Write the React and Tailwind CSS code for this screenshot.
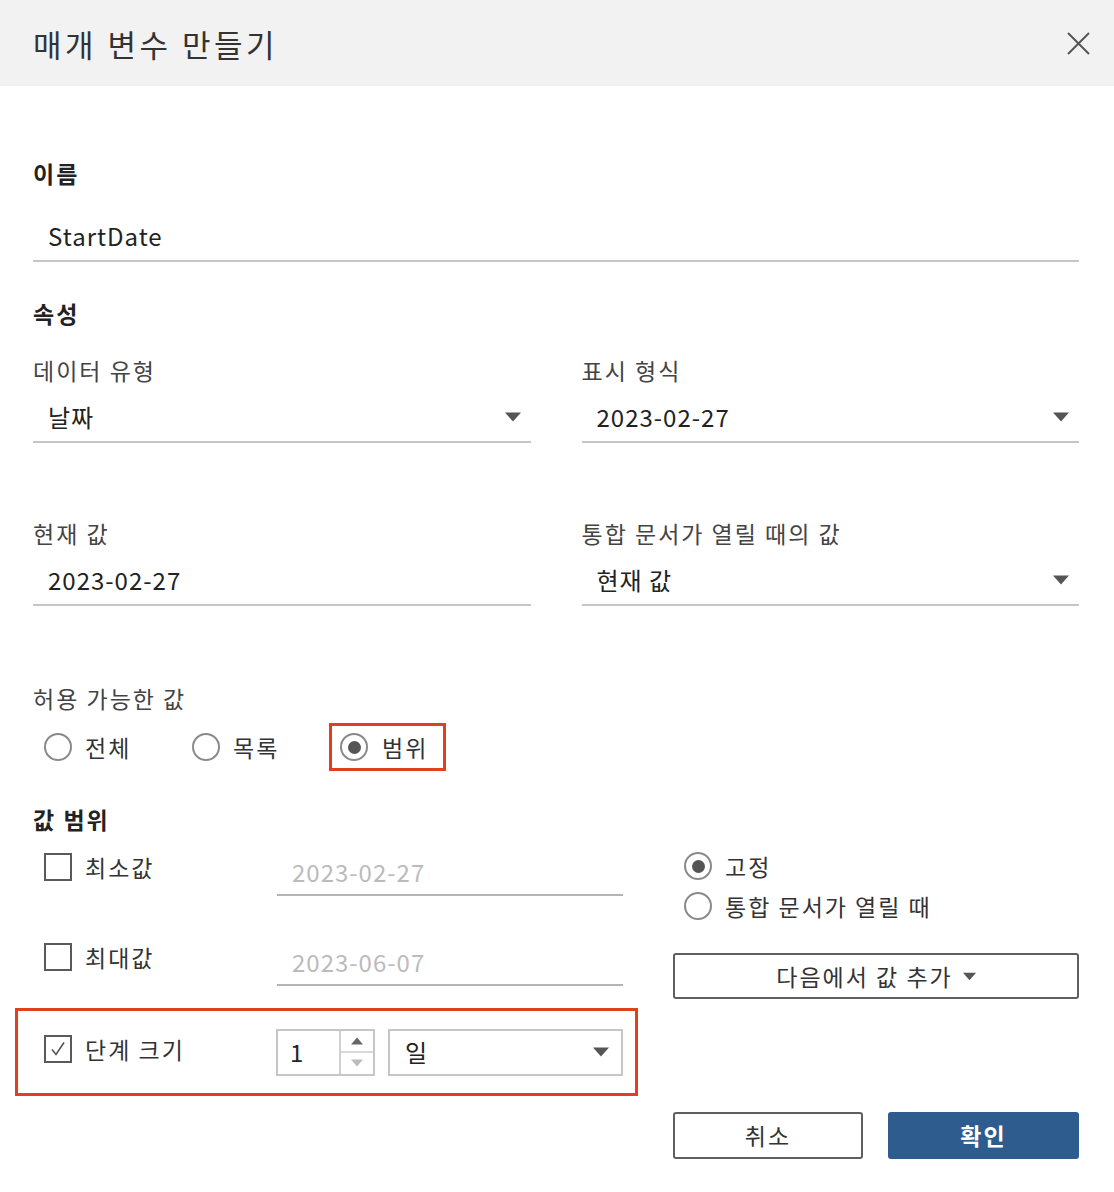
import React from "react";

const Caret = ({ w = 16, h = 10 }) => (
  <svg width={w} height={h} viewBox="0 0 16 10" className="shrink-0">
    <path d="M0 0.5h16L8 9.5z" fill="#555555" />
  </svg>
);

const Radio = ({ checked }) => (
  <span className="relative flex h-[28px] w-[28px] shrink-0 items-center justify-center rounded-full border-2 border-[#8a8a8a] bg-white">
    {checked && <span className="h-[13px] w-[13px] rounded-full bg-[#555555]" />}
  </span>
);

const Checkbox = ({ checked }) => (
  <span className="flex h-[28px] w-[28px] shrink-0 items-center justify-center border-2 border-[#5a5a5a] bg-white">
    {checked && (
      <svg width="20" height="20" viewBox="0 0 20 20">
        <path d="M4 10.5l4 5 8-12" fill="none" stroke="#555555" strokeWidth="1.6" />
      </svg>
    )}
  </span>
);

const Label = ({ children, bold }) => (
  <div
    className={`h-[30px] text-[23px] leading-[30px] tracking-[2px] ${
      bold ? "font-bold text-[#222222]" : "text-[#444444]"
    }`}
  >
    {children}
  </div>
);

const Field = ({ children, arrow }) => (
  <div className="flex h-[48px] items-center justify-between border-b-2 border-[#c6c6c6] pb-[2px] pl-[15px] pr-[10px] text-[24px] tracking-[1px] text-[#222222]">
    <span>{children}</span>
    {arrow && <Caret />}
  </div>
);

export default function App() {
  return (
    <div className="h-[1192px] w-[1114px] overflow-hidden bg-white font-['Noto_Sans_CJK_KR',sans-serif] text-[#333333]">
      {/* Header */}
      <div className="flex h-[86px] items-center justify-between bg-[#f2f2f2] pl-[33px] pr-[24px]">
        <div className="text-[31px] leading-none tracking-[3.5px] text-[#333333]">매개 변수 만들기</div>
        <svg width="23" height="23" viewBox="0 0 23 23">
          <path d="M1 1L22 22M22 1L1 22" stroke="#555555" strokeWidth="2" />
        </svg>
      </div>

      <div className="pl-[33px] pr-[35px]">
        {/* 이름 */}
        <div className="pt-[72px]">
          <Label bold>이름</Label>
        </div>
        <div className="mt-[26px]">
          <Field>StartDate</Field>
        </div>

        {/* 속성 */}
        <div className="mt-[36px]">
          <Label bold>속성</Label>
        </div>

        <div className="mt-[27px] grid grid-cols-2 gap-x-[51px]">
          <div>
            <Label>데이터 유형</Label>
            <div className="mt-[10px]">
              <Field arrow>날짜</Field>
            </div>
          </div>
          <div>
            <Label>표시 형식</Label>
            <div className="mt-[10px]">
              <Field arrow>2023-02-27</Field>
            </div>
          </div>
          <div className="mt-[75px]">
            <Label>현재 값</Label>
            <div className="mt-[10px]">
              <Field>2023-02-27</Field>
            </div>
          </div>
          <div className="mt-[75px]">
            <Label>통합 문서가 열릴 때의 값</Label>
            <div className="mt-[10px]">
              <Field arrow>현재 값</Field>
            </div>
          </div>
        </div>

        {/* 허용 가능한 값 */}
        <div className="mt-[77px]">
          <Label>허용 가능한 값</Label>
        </div>
        <div className="mt-[10px] flex items-center pl-[11px] text-[23px] tracking-[2px] text-[#333333]">
          <div className="flex w-[148px] items-center gap-[13px]">
            <Radio />
            <span>전체</span>
          </div>
          <div className="flex w-[137px] items-center gap-[13px]">
            <Radio />
            <span>목록</span>
          </div>
          <div className="flex h-[48px] w-[117px] items-center gap-[14px] border-[3px] border-[#e0401e] pl-[8px]">
            <Radio checked />
            <span>범위</span>
          </div>
        </div>

        {/* 값 범위 */}
        <div className="mt-[33px]">
          <Label bold>값 범위</Label>
        </div>

        <div className="mt-[16px] flex">
          <div className="w-[590px]">
            <div className="flex">
              <div className="flex h-[34px] w-[244px] items-center gap-[13px] pl-[11px] text-[23px] tracking-[2px]">
                <Checkbox />
                <span>최소값</span>
              </div>
              <div className="flex h-[46px] flex-1 items-center border-b-2 border-[#b5b5b5] pl-[15px] text-[24px] tracking-[1px] text-[#bbbbbb]">
                2023-02-27
              </div>
            </div>
            <div className="mt-[44px] flex">
              <div className="flex h-[34px] w-[244px] items-center gap-[13px] pl-[11px] text-[23px] tracking-[2px]">
                <Checkbox />
                <span>최대값</span>
              </div>
              <div className="flex h-[46px] flex-1 items-center border-b-2 border-[#b5b5b5] pl-[15px] text-[24px] tracking-[1px] text-[#bbbbbb]">
                2023-06-07
              </div>
            </div>
          </div>

          <div className="-mt-[4px] ml-[50px] w-[406px] text-[23px] tracking-[2px]">
            <div className="flex h-[40px] items-center gap-[13px] pl-[11px]">
              <Radio checked />
              <span>고정</span>
            </div>
            <div className="flex h-[40px] items-center gap-[13px] pl-[11px]">
              <Radio />
              <span>통합 문서가 열릴 때</span>
            </div>
            <button className="mt-[27px] flex h-[46px] w-full items-center justify-center gap-[10px] rounded-[3px] border-2 border-[#5f5f5f] bg-white text-[23px] tracking-[2px] text-[#333333]">
              <span>다음에서 값 추가</span>
              <Caret w={13} h={9} />
            </button>
          </div>
        </div>

        {/* 단계 크기 */}
        <div className="-ml-[18px] mt-[9px] flex h-[88px] w-[623px] items-center border-[3px] border-[#e0401e] pl-[26px]">
          <div className="flex w-[232px] items-center gap-[13px] self-start pt-[21px] text-[23px] tracking-[2px]">
            <Checkbox checked />
            <span>단계 크기</span>
          </div>
          <div className="flex h-[47px] w-[99px] border-2 border-[#c6c6c6]">
            <div className="flex flex-1 items-center pl-[12px] text-[24px] text-[#222222]">1</div>
            <div className="flex w-[34px] flex-col border-l-2 border-[#d0d0d0]">
              <div className="flex flex-1 items-center justify-center border-b-2 border-[#d8d8d8]">
                <svg width="12" height="8" viewBox="0 0 12 8">
                  <path d="M0 7.5h12L6 0.5z" fill="#666666" />
                </svg>
              </div>
              <div className="flex flex-1 items-center justify-center">
                <svg width="12" height="8" viewBox="0 0 12 8">
                  <path d="M0 0.5h12L6 7.5z" fill="#bbbbbb" />
                </svg>
              </div>
            </div>
          </div>
          <div className="ml-[13px] flex h-[47px] w-[235px] items-center justify-between border-2 border-[#c6c6c6] pl-[15px] pr-[12px] text-[24px] text-[#222222]">
            <span>일</span>
            <Caret />
          </div>
        </div>

        {/* Buttons */}
        <div className="mt-[16px] flex justify-end gap-[25px]">
          <button className="flex h-[47px] w-[190px] items-center justify-center rounded-[3px] border-2 border-[#5f5f5f] bg-white text-[23px] tracking-[2px] text-[#333333]">
            취소
          </button>
          <button className="flex h-[47px] w-[191px] items-center justify-center rounded-[3px] bg-[#2e5c8f] text-[23px] font-bold tracking-[2px] text-white">
            확인
          </button>
        </div>
      </div>
    </div>
  );
}
